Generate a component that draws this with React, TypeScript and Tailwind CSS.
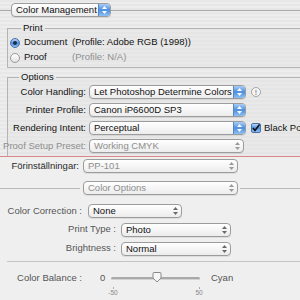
import React from 'react';

const stripes =
  'bg-[repeating-linear-gradient(0deg,#ededed_0px,#ededed_2px,#e7e7e7_2px,#e7e7e7_4px)]';

// двойная стрелка всплывающего меню
const Arrows = ({ color }: { color: string }) => (
  <svg width="5" height="8" viewBox="0 0 5 8">
    <path d="M2.5 0 L5 3 L0 3 Z" fill={color} />
    <path d="M2.5 8 L5 5 L0 5 Z" fill={color} />
  </svg>
);

interface PopupProps {
  text: string;
  width: string;
  blue?: boolean;
  disabled?: boolean;
}

const Popup: React.FC<PopupProps> = ({ text, width, blue, disabled }) => (
  <div
    className={`${width} shrink-0 h-[14px] flex items-stretch rounded-[4px] border border-[#9c9c9c] bg-gradient-to-b from-white to-[#ececec] overflow-hidden shadow-[0_1px_0_rgba(0,0,0,0.08)]`}
  >
    <div
      className={`flex-1 pl-[4px] leading-[12px] whitespace-nowrap overflow-hidden ${disabled ? 'text-[#8e8e8e]' : 'text-[#111]'}`}
    >
      {text}
    </div>
    {blue ? (
      <div className="w-[12px] flex items-center justify-center bg-gradient-to-b from-[#a9cdf7] via-[#4c8fe0] to-[#8ec0f4] border-l border-[#5a86c0]">
        <Arrows color="#ffffff" />
      </div>
    ) : (
      <div className="w-[12px] flex items-center justify-center">
        <Arrows color={disabled ? '#9a9a9a' : '#6a6a6a'} />
      </div>
    )}
  </div>
);

const Radio = ({ on }: { on?: boolean }) =>
  on ? (
    <div className="w-[10px] h-[10px] rounded-full border border-[#4a6fa8] bg-gradient-to-b from-[#b9d6f7] via-[#4d8fe0] to-[#8fc0f3] flex items-center justify-center">
      <div className="w-[4px] h-[4px] rounded-full bg-[#1c2c45]" />
    </div>
  ) : (
    <div className="w-[10px] h-[10px] rounded-full border border-[#9a9a9a] bg-gradient-to-b from-white to-[#e2e2e2]" />
  );

// подпись, выровненная вправо (лишний текст уходит влево)
const Label: React.FC<{ w: string; className?: string; children: React.ReactNode }> = ({
  w,
  className,
  children,
}) => (
  <div className={`${w} min-w-0 shrink-0 flex justify-end whitespace-nowrap ${className ?? ''}`}>
    <span className="shrink-0">{children}</span>
  </div>
);

const OptRow: React.FC<{ label: string; children: React.ReactNode; disabled?: boolean }> = ({
  label,
  children,
  disabled,
}) => (
  <div className="h-[18px] flex items-center">
    <Label w="w-[78px]" className={disabled ? 'text-[#8e8e8e]' : 'text-[#111]'}>
      {label}
    </Label>
    <div className="ml-[3px] flex items-center gap-[5px]">{children}</div>
  </div>
);

export default function App() {
  return (
    <div
      className="w-[300px] h-[300px] overflow-hidden text-[9.5px] flex flex-col"
      style={{ fontFamily: '"Liberation Sans", Arial, sans-serif' }}
    >
      {/* Photoshop: верхняя часть */}
      <div className={`${stripes} h-[156px] flex flex-col`}>
        <div className="h-[20px] flex items-center">
          <div className="w-[11px] h-px bg-[#a8a8a8]" />
          <Popup text="Color Management" width="w-[100px]" blue />
          <div className="flex-1 h-px bg-[#a8a8a8]" />
        </div>

        <fieldset className="mt-[2px] ml-[7px] mr-[-4px] border border-r-0 border-[#b4b4b4] bg-[#e4e4e4]/40 pb-[2px] pt-[1px]">
          <legend className="ml-[13px] px-[2px] h-[12px] leading-[12px] text-[#111]">Print</legend>
          <div className="h-[15px] flex items-center pl-[2px]">
            <Radio on />
            <span className="ml-[4px] w-[48px] text-[#111]">Document</span>
            <span className="text-[#111]">(Profile: Adobe RGB (1998))</span>
          </div>
          <div className="h-[15px] flex items-center pl-[2px]">
            <Radio />
            <span className="ml-[4px] w-[48px] text-[#111]">Proof</span>
            <span className="text-[#8e8e8e]">(Profile: N/A)</span>
          </div>
        </fieldset>

        <fieldset className="mt-[3px] ml-[7px] mr-[-4px] border border-r-0 border-b-0 border-[#b4b4b4] bg-[#e4e4e4]/40 flex-1 min-w-0">
          <legend className="ml-[11px] px-[2px] h-[12px] leading-[12px] text-[#111]">Options</legend>
          <OptRow label="Color Handling:">
            <Popup text="Let Photoshop Determine Colors" width="w-[157px]" blue />
            <div className="w-[10px] h-[10px] rounded-full border border-[#a4a4a4] bg-white/60 flex items-center justify-center text-[7px] font-bold text-[#8a8a8a] leading-none">
              !
            </div>
          </OptRow>
          <OptRow label="Printer Profile:">
            <Popup text="Canon iP6600D SP3" width="w-[157px]" blue />
          </OptRow>
          <OptRow label="Rendering Intent:">
            <Popup text="Perceptual" width="w-[157px]" blue />
            <div className="flex items-center gap-[3px] whitespace-nowrap text-[#111]">
              <div className="w-[10px] h-[10px] shrink-0 rounded-[2px] border border-[#4a6fa8] bg-gradient-to-b from-[#b9d6f7] via-[#4d8fe0] to-[#8fc0f3] flex items-center justify-center">
                <svg width="8" height="8" viewBox="0 0 8 8">
                  <path d="M1 4 L3 6.5 L7.5 0.5" stroke="#111" strokeWidth="1.6" fill="none" />
                </svg>
              </div>
              <span>Black Point</span>
            </div>
          </OptRow>
          <OptRow label="Proof Setup Preset:" disabled>
            <Popup text="Working CMYK" width="w-[155px]" disabled />
          </OptRow>
        </fieldset>
      </div>

      <div className="h-px bg-[#d9868c]" />

      {/* диалог печати: нижняя часть */}
      <div className="flex-1 bg-[#efefef] flex flex-col text-[#555]">
        <div className="h-[18px] flex items-center">
          <Label w="w-[79px]" className="text-[#2a2a2a]">Förinställningar:</Label>
          <div className="ml-[4px]">
            <Popup text="PP-101" width="w-[155px]" disabled />
          </div>
        </div>

        <div className="mt-[4px] h-[18px] flex items-center">
          <div className="w-[80px] h-px bg-[#b8b8b8]" />
          <div className="ml-[3px] mr-[2px]">
            <Popup text="Color Options" width="w-[155px]" disabled />
          </div>
          <div className="flex-1 h-px bg-[#b8b8b8]" />
        </div>

        <div className="mt-[5px] h-[18px] flex items-center">
          <Label w="w-[82px]">Color Correction :</Label>
          <div className="ml-[6px]">
            <Popup text="None" width="w-[94px]" />
          </div>
        </div>
        <div className="h-[19px] flex items-center">
          <Label w="w-[116px]">Print Type :</Label>
          <div className="ml-[5px]">
            <Popup text="Photo" width="w-[110px]" />
          </div>
        </div>
        <div className="h-[19px] flex items-center">
          <Label w="w-[116px]">Brightness :</Label>
          <div className="ml-[5px]">
            <Popup text="Normal" width="w-[110px]" />
          </div>
        </div>

        <div className="mt-[3px] ml-[7px] h-px bg-[#c4c4c4]" />

        <div className="mt-[7px] h-[18px] flex items-center">
          <Label w="w-[82px]">Color Balance :</Label>
          <div className="ml-[18px] w-[6px]">0</div>
          <div className="ml-[5px] w-[89px] flex items-center">
            <div className="flex-1 h-[3px] rounded-full bg-[#a9a9a9] border-b border-[#d2d2d2]" />
          </div>
          <div className="ml-[11px]">Cyan</div>
        </div>
        <div className="h-[10px] flex text-[6.5px] text-[#888]">
          <div className="ml-[108px] w-[10px] flex flex-col items-center">
            <div className="w-px h-[2px] bg-[#aaa]" />
            <span className="leading-[7px]">-50</span>
          </div>
          <div className="ml-[76px] w-[10px] flex flex-col items-center">
            <div className="w-px h-[2px] bg-[#aaa]" />
            <span className="leading-[7px]">50</span>
          </div>
        </div>
      </div>

      {/* ползунок */}
      <svg className="absolute left-[152px] top-[272px]" width="10" height="11" viewBox="0 0 10 11">
        <path
          d="M1 1.5 Q1 0.5 2 0.5 L8 0.5 Q9 0.5 9 1.5 L9 6 L5 10 L1 6 Z"
          fill="#f6f6f6"
          stroke="#8a8a8a"
        />
      </svg>
    </div>
  );
}
